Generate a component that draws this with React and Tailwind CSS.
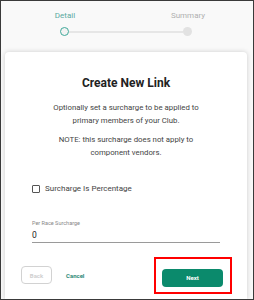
export default function App() {
  return (
    <div
      className="w-[254px] h-[300px] border border-[#3a3a3a] bg-[#f9f9f9] overflow-hidden flex flex-col"
      style={{ fontFamily: "Roboto, 'Liberation Sans', sans-serif" }}
    >
      {/* Stepper */}
      <div className="flex justify-between mt-[9px] ml-[39px] mr-[40px] text-[8px] leading-[12px]">
        <div className="w-[50px] text-center text-[#5aa9a0]">Detail</div>
        <div className="w-[50px] text-center text-[#b0b0b0]">Summary</div>
      </div>
      <div className="flex items-center mt-[5px] ml-[59px] mr-[61px]">
        <div className="w-[9px] h-[9px] rounded-full border-[1.5px] border-[#3fa99a] bg-[#f3f3f3] shrink-0" />
        <div className="flex-1 h-[2px] bg-[#e6e6e6]" />
        <div className="w-[9px] h-[9px] rounded-full bg-[#e2e2e2] shrink-0" />
      </div>

      {/* Card */}
      <div className="mt-[16px] ml-[4px] mr-[6px] flex-1 bg-white rounded-t-[4px] shadow-[0_0_5px_rgba(0,0,0,0.18)] flex flex-col">
        <div className="px-[27px] flex flex-col">
          <h1 className="mt-[23px] text-center text-[12px] leading-[16px] font-bold text-[#222]">
            Create New Link
          </h1>
          <div className="mx-[14px] flex flex-col">
            <p className="mt-[10px] text-center text-[7.8px] leading-[13px] text-[#444]">
              Optionally set a surcharge to be applied to primary members of your Club.
            </p>
            <p className="mt-[6px] text-center text-[7.8px] leading-[13px] text-[#444]">
              NOTE: this surcharge does not apply to component vendors.
            </p>
          </div>
          <label className="mt-[24px] flex items-center gap-[5px] text-[8px] leading-[12px] text-[#444]">
            <span className="w-[8px] h-[8px] border border-[#555] rounded-[1px] bg-white shrink-0" />
            Surcharge Is Percentage
          </label>
          <div className="mt-[24px] text-[5.5px] leading-[8px] text-[#888]">Per Race Surcharge</div>
          <div className="mt-[3px] text-[8.5px] leading-[11px] text-[#222]">0</div>
          <div className="mt-[1px] h-px bg-[#9a9a9a]" />
        </div>

        <div className="mt-[20px] ml-[16px] mr-[24px] flex items-center">
          <button className="w-[31px] h-[18px] border border-[#d2d2d2] rounded-[4px] text-[6px] font-bold text-[#cfcfcf] bg-white">
            Back
          </button>
          <span className="ml-[14px] text-[6px] font-bold text-[#2f8a78]">Cancel</span>
          <div className="ml-auto relative">
            <div className="absolute -left-[8px] -top-[6px] -right-[9px] -bottom-[7px] border-2 border-[#ff0000]" />
            <button className="w-[61px] h-[18px] rounded-[4px] bg-[#0b8a6c] text-white text-[6px] font-bold">
              Next
            </button>
          </div>
        </div>
      </div>
    </div>
  );
}
